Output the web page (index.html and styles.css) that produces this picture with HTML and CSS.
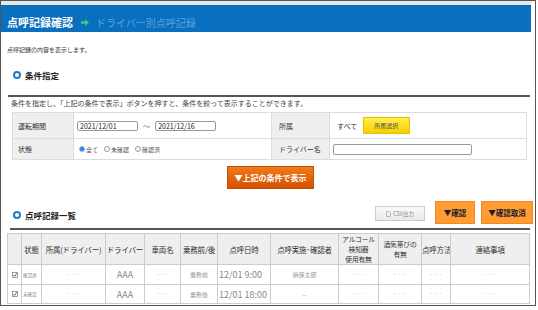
FILE: index.html
```html
<!DOCTYPE html>
<html lang="ja">
<head>
  <meta charset="UTF-8">
  <title>点呼記録確認</title>
  <link rel="stylesheet" href="styles.css">
</head>
<body>

  <div class="frame">
    <div class="topband"></div>

    <header class="title-bar">
      <span class="title">点呼記録確認</span>
      <svg class="arrow" width="8" height="7" viewBox="0 0 8 7">
        <path d="M0 2.3H4.2V0L8 3.5L4.2 7V4.7H0Z" fill="#2fd27a"/>
      </svg>
      <span class="sub">ドライバー別点呼記録</span>
    </header>

    <p class="lead">点呼記録の内容を表示します。</p>

    <h2 class="sec sec-first"><span class="ring"></span>条件指定</h2>
    <p class="note">条件を指定し、「上記の条件で表示」ボタンを押すと、条件を絞って表示することができます。</p>

    <table class="cond">
      <colgroup>
        <col style="width:61px">
        <col style="width:198px">
        <col style="width:58px">
        <col style="width:197px">
      </colgroup>
      <tr class="r1">
        <th>運転期間</th>
        <td>
          <span class="field date">2021/12/01</span>
          <span class="tilde">～</span>
          <span class="field date">2021/12/16</span>
        </td>
        <th>所属</th>
        <td>
          <span class="all">すべて</span>
          <button class="btn-yellow">所属選択</button>
        </td>
      </tr>
      <tr class="r2">
        <th>状態</th>
        <td>
          <span class="radios">
            <span class="radio on"></span><span class="rlabel">全て</span>
            <span class="radio"></span><span class="rlabel">未確認</span>
            <span class="radio"></span><span class="rlabel">確認済</span>
          </span>
        </td>
        <th>ドライバー名</th>
        <td><span class="field name"></span></td>
      </tr>
    </table>

    <div class="search-row">
      <button class="btn-search">▼上記の条件で表示</button>
    </div>

    <div class="sec-row">
      <h2 class="sec"><span class="ring"></span>点呼記録一覧</h2>
      <div class="actions">
        <button class="btn-csv">
          <svg width="5" height="6" viewBox="0 0 5 6"><path d="M0.5 0.5H3.3L4.5 1.7V5.5H0.5Z" fill="none" stroke="#aaa" stroke-width="0.8"/></svg>
          CSV出力
        </button>
        <button class="btn-orange w40">▼確認</button>
        <button class="btn-orange w52">▼確認取消</button>
      </div>
    </div>

    <table class="list">
      <colgroup>
        <col style="width:14px">
        <col style="width:20px">
        <col style="width:64px">
        <col style="width:39px">
        <col style="width:36px">
        <col style="width:37px">
        <col style="width:53px">
        <col style="width:68px">
        <col style="width:40px">
        <col style="width:43px">
        <col style="width:29px">
        <col style="width:79px">
      </colgroup>
      <thead>
        <tr>
          <th></th>
          <th>状態</th>
          <th>所属(ドライバー)</th>
          <th>ドライバー</th>
          <th>車両名</th>
          <th>乗務前/後</th>
          <th>点呼日時</th>
          <th>点呼実施･確認者</th>
          <th class="multi">アルコール<br>検知器<br>使用有無</th>
          <th class="multi">酒気帯びの<br>有無</th>
          <th>点呼方法</th>
          <th>連絡事項</th>
        </tr>
      </thead>
      <tbody>
        <tr class="b1">
          <td class="chk"><svg width="6" height="6" viewBox="0 0 6 6"><rect x="0.5" y="0.5" width="5" height="5" fill="#fff" stroke="#777" stroke-width="0.7"/><path d="M1.4 3L2.6 4.3L4.8 1.2" fill="none" stroke="#333" stroke-width="0.8"/></svg></td>
          <td class="state">確認済</td>
          <td class="dots">・・・</td>
          <td class="latin">AAA</td>
          <td class="dots">・・・</td>
          <td class="small">乗務前</td>
          <td class="time">12/01 9:00</td>
          <td class="small">損保太郎</td>
          <td class="dots">・・・</td>
          <td class="dots">・・・</td>
          <td class="dots">・・・</td>
          <td class="dots">・・・</td>
        </tr>
        <tr class="b2">
          <td class="chk"><svg width="6" height="6" viewBox="0 0 6 6"><rect x="0.5" y="0.5" width="5" height="5" fill="#fff" stroke="#777" stroke-width="0.7"/><path d="M1.4 3L2.6 4.3L4.8 1.2" fill="none" stroke="#333" stroke-width="0.8"/></svg></td>
          <td class="state">未確認</td>
          <td class="dots">・・・</td>
          <td class="latin">AAA</td>
          <td class="dots">・・・</td>
          <td class="small">乗務後</td>
          <td class="time">12/01 18:00</td>
          <td class="small">--</td>
          <td class="dots">・・・</td>
          <td class="dots">・・・</td>
          <td class="dots">・・・</td>
          <td class="dots">・・・</td>
        </tr>
      </tbody>
    </table>
  </div>

</body>
</html>
```

FILE: styles.css
```css
* {
  margin: 0;
  padding: 0;
  box-sizing: border-box;
}

body {
  font-family: "Noto Sans CJK JP", "Noto Sans", sans-serif;
  background: #fff;
  color: #333;
}

/* Marco general */
.frame {
  width: 536px;
  height: 306px;
  border: 1px solid #555;
  padding-right: 4px;
  overflow: hidden;
}

.topband {
  height: 4px;
  background: #e6e6e6;
}

.title-bar {
  height: 27px;
  background: #0b6fbf;
  display: flex;
  align-items: flex-end;
  padding: 0 0 4px 6px;
}
.title {
  color: #fff;
  font-size: 11px;
  line-height: 11px;
  font-weight: bold;
}
.arrow {
  margin: 0 7px 2px 8px;
}
.sub {
  color: #58a2dc;
  font-size: 10px;
  line-height: 11px;
}

.lead {
  margin-top: 14px;
  padding-left: 6px;
  font-size: 6px;
  line-height: 8px;
  color: #333;
}

/* Encabezado de sección */
.sec {
  display: flex;
  align-items: center;
  font-size: 8.5px;
  line-height: 12px;
  font-weight: bold;
  color: #222;
}
.sec-first {
  margin: 15px 1px 0 7px;
  padding: 0 0 14px 5px;
  border-bottom: 2px solid #555;
}
.ring {
  width: 8px;
  height: 8px;
  border: 2px solid #1f7ccc;
  border-radius: 50%;
  margin-right: 4px;
}

.note {
  margin-top: 2px;
  padding-left: 10px;
  font-size: 7px;
  line-height: 9px;
  color: #444;
}

/* Tabla de condiciones */
.cond {
  margin: 4px 0 0 11px;
  width: 514px;
  border-collapse: collapse;
  table-layout: fixed;
}
.cond th, .cond td {
  border: 1px solid #ddd;
  font-size: 7px;
  font-weight: normal;
  text-align: left;
  vertical-align: middle;
}
.cond th {
  background: #efefef;
  padding-left: 5px;
  color: #333;
}
.cond td {
  padding-left: 3px;
  white-space: nowrap;
}
.cond .r1 {
  height: 26px;
}
.cond .r2 {
  height: 21px;
}
.cond .r1 th:nth-child(3), .cond .r2 th:nth-child(3) {
  padding-left: 7px;
}

.field {
  display: inline-block;
  vertical-align: middle;
  height: 10px;
  border: 1px solid #999;
  border-radius: 2px;
  background: #fff;
  font-size: 7px;
  line-height: 8px;
  padding-left: 2px;
  color: #222;
}
.date {
  width: 61px;
}
.tilde {
  display: inline-block;
  vertical-align: middle;
  width: 14px;
  text-align: center;
  color: #666;
  font-size: 7px;
}
.name {
  width: 139px;
  height: 11px;
}

.all {
  display: inline-block;
  vertical-align: middle;
  margin: 0 4px 0 4px;
  font-size: 7px;
}
.btn-yellow {
  vertical-align: middle;
  width: 47px;
  height: 17px;
  border: 1px solid #e8c200;
  background: linear-gradient(#fff04a, #f7cd00);
  font-family: inherit;
  font-size: 6px;
  color: #555;
}

.radios {
  display: flex;
  align-items: center;
  padding-left: 2px;
}
.radio {
  width: 6px;
  height: 6px;
  border: 1px solid #999;
  border-radius: 50%;
  background: #fff;
}
.radio.on {
  background: #2e7fe0;
  border-color: #8ab6ee;
}
.rlabel {
  font-size: 6px;
  color: #555;
  margin: 0 6px 0 1px;
}

/* Botón principal */
.search-row {
  display: flex;
  justify-content: center;
  padding-left: 9px;
  margin-top: 6px;
}
.btn-search {
  width: 87px;
  height: 23px;
  border: 1px solid #c94d00;
  background: linear-gradient(#f07a1c, #d35200);
  color: #fff;
  font-family: inherit;
  font-size: 8px;
  font-weight: bold;
}

/* Sección listado */
.sec-row {
  display: flex;
  align-items: center;
  justify-content: space-between;
  height: 29px;
  margin: 12px 1px 0 9px;
  padding: 0 0 4px 3px;
  border-bottom: 2px solid #555;
}
.sec-row .sec {
  padding-top: 5px;
}
.actions {
  display: flex;
  align-items: center;
  margin-right: -3px;
}
.btn-csv {
  display: flex;
  align-items: center;
  justify-content: center;
  gap: 2px;
  width: 50px;
  height: 15px;
  border: 1px solid #ccc;
  background: linear-gradient(#fafafa, #e9e9e9);
  color: #888;
  font-family: inherit;
  font-size: 5.5px;
  margin: 2px 10px 0 0;
}
.btn-orange {
  height: 23px;
  border: 1px solid #f08a20;
  background: #ff9b30;
  color: #1c1c30;
  font-family: inherit;
  font-size: 7.5px;
  font-weight: bold;
}
.w40 {
  width: 40px;
  margin-right: 6px;
}
.w52 {
  width: 52px;
}

/* Tabla de registros */
.list {
  margin: 3px 0 0 6px;
  width: 522px;
  border-collapse: collapse;
  table-layout: fixed;
}
.list th, .list td {
  border: 1px solid #ccc;
  text-align: center;
  vertical-align: middle;
  white-space: nowrap;
  overflow: hidden;
}
.list th {
  height: 31px;
  background: #efefef;
  font-size: 7.5px;
  line-height: 11px;
  font-weight: normal;
  color: #333;
  letter-spacing: -0.2px;
}
.list th.multi {
  font-size: 6.8px;
  line-height: 10px;
}
.list .b1 td {
  height: 20px;
}
.list .b2 td {
  height: 19px;
}
.list td {
  color: #999;
  font-size: 6px;
}
.list .chk {
  text-align: center;
  padding-top: 1px;
}
.list .state {
  text-align: left;
  font-size: 4.5px;
  color: #888;
  padding-left: 1px;
}
.list .dots {
  font-size: 4px;
  letter-spacing: 0.3px;
}
.list .latin {
  font-size: 9px;
  color: #888;
}
.list .time {
  font-size: 9px;
  color: #888;
  text-align: left;
  padding-left: 1px;
}
.list .small {
  font-size: 6px;
}
```
